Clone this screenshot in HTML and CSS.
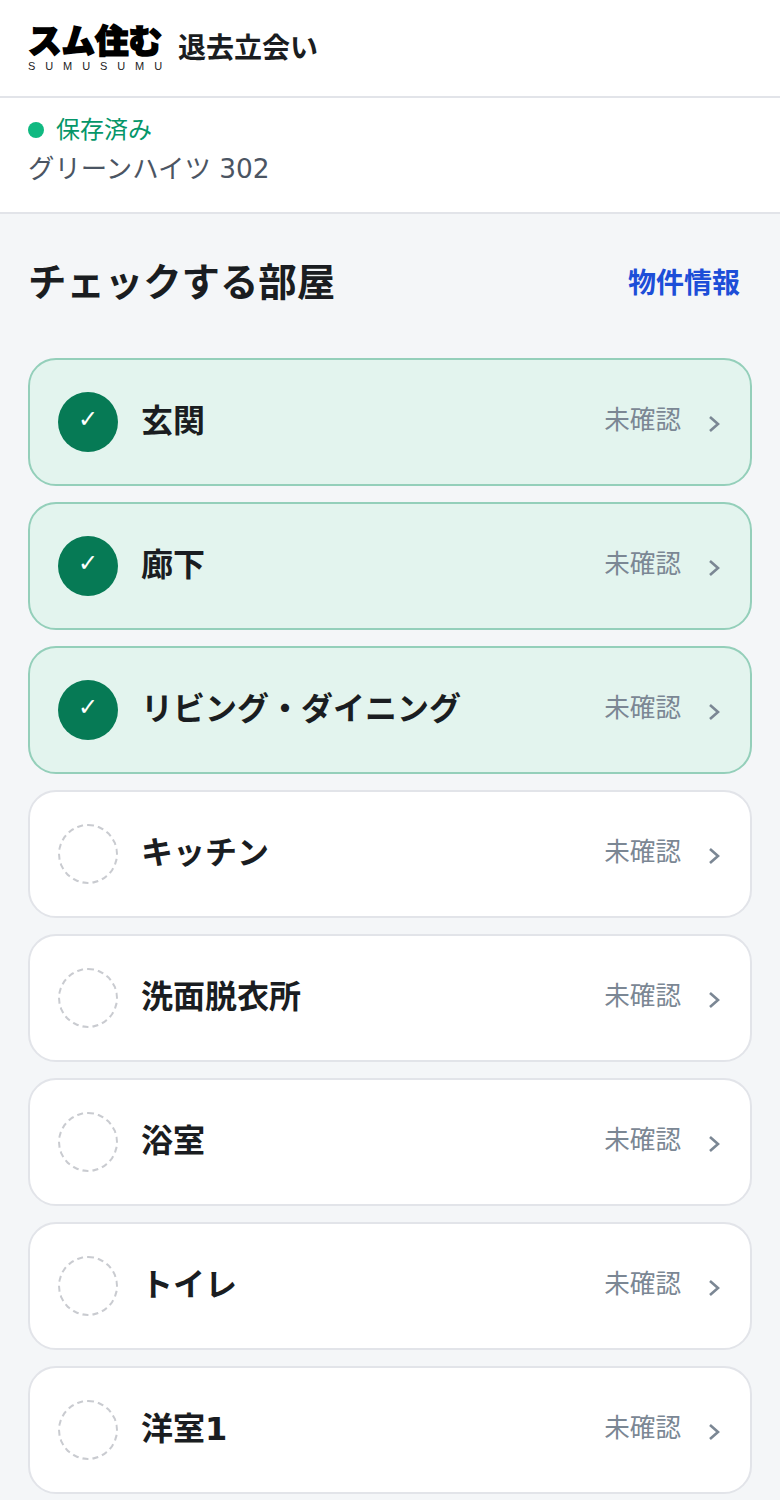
FILE: index.html
```html
<!DOCTYPE html>
<html lang="ja">
<head>
    <meta charset="UTF-8">
    <meta name="viewport" content="width=device-width, initial-scale=1.0">
    <title>退去立会い</title>
    <link rel="stylesheet" href="styles.css">
</head>
<body>
    <header class="topBar">
        <div class="logo">
            <span class="logoMain">スム住む</span>
            <span class="logoSub">SUMUSUMU</span>
        </div>
        <span class="appName">退去立会い</span>
    </header>

    <div class="status">
        <p class="saved"><span class="dot"></span>保存済み</p>
        <p class="property">グリーンハイツ 302</p>
    </div>

    <main class="content">
        <div class="contentHead">
            <h1>チェックする部屋</h1>
            <a class="infoLink" href="#">物件情報</a>
        </div>

        <ul class="roomList">
            <li class="room done">
                <span class="mark">✓</span>
                <span class="roomName">玄関</span>
                <span class="roomState">未確認</span>
                <svg class="chevron" viewBox="0 0 12 20"><path d="M2 3l8 7-8 7"/></svg>
            </li>
            <li class="room done">
                <span class="mark">✓</span>
                <span class="roomName">廊下</span>
                <span class="roomState">未確認</span>
                <svg class="chevron" viewBox="0 0 12 20"><path d="M2 3l8 7-8 7"/></svg>
            </li>
            <li class="room done">
                <span class="mark">✓</span>
                <span class="roomName">リビング・ダイニング</span>
                <span class="roomState">未確認</span>
                <svg class="chevron" viewBox="0 0 12 20"><path d="M2 3l8 7-8 7"/></svg>
            </li>
            <li class="room">
                <span class="mark"></span>
                <span class="roomName">キッチン</span>
                <span class="roomState">未確認</span>
                <svg class="chevron" viewBox="0 0 12 20"><path d="M2 3l8 7-8 7"/></svg>
            </li>
            <li class="room">
                <span class="mark"></span>
                <span class="roomName">洗面脱衣所</span>
                <span class="roomState">未確認</span>
                <svg class="chevron" viewBox="0 0 12 20"><path d="M2 3l8 7-8 7"/></svg>
            </li>
            <li class="room">
                <span class="mark"></span>
                <span class="roomName">浴室</span>
                <span class="roomState">未確認</span>
                <svg class="chevron" viewBox="0 0 12 20"><path d="M2 3l8 7-8 7"/></svg>
            </li>
            <li class="room">
                <span class="mark"></span>
                <span class="roomName">トイレ</span>
                <span class="roomState">未確認</span>
                <svg class="chevron" viewBox="0 0 12 20"><path d="M2 3l8 7-8 7"/></svg>
            </li>
            <li class="room">
                <span class="mark"></span>
                <span class="roomName">洋室1</span>
                <span class="roomState">未確認</span>
                <svg class="chevron" viewBox="0 0 12 20"><path d="M2 3l8 7-8 7"/></svg>
            </li>
        </ul>
    </main>
</body>
</html>
```

FILE: styles.css
```css
* {
    box-sizing: border-box;
}
html, body {
    height: 1500px;
    overflow: hidden;
}
body {
    margin: 0;
    background-color: #f4f6f8;
    color: #1a1d21;
    font-family: "DejaVu Sans", "Noto Sans CJK JP", sans-serif;
}
.topBar {
    display: flex;
    align-items: center;
    height: 98px;
    padding: 0 28px;
    gap: 15px;
    background-color: #fff;
    border-bottom: 2px solid #e2e4e9;
}
.logo {
    display: flex;
    flex-direction: column;
    width: 135px;
}
.logoMain {
    font-family: "Liberation Sans", "Noto Sans CJK JP", sans-serif;
    font-weight: 900;
    font-size: 33.5px;
    line-height: 33px;
    color: #000;
    white-space: nowrap;
    -webkit-text-stroke: 1.6px #000;
}
.logoSub {
    font-family: "Liberation Sans", sans-serif;
    font-size: 11px;
    line-height: 12px;
    margin-top: 2px;
    letter-spacing: 9.9px;
    color: #222;
    white-space: nowrap;
}
.appName {
    font-size: 28px;
    font-weight: 700;
    margin-top: -5px;
}
.status {
    height: 116px;
    padding: 16px 28px 0;
    background-color: #fff;
    border-bottom: 2px solid #e2e4e9;
}
.saved {
    display: flex;
    align-items: center;
    gap: 12px;
    margin: 0;
    font-size: 24px;
    line-height: 32px;
    color: #059669;
}
.dot {
    width: 16px;
    height: 16px;
    border-radius: 50%;
    background-color: #10b981;
}
.property {
    margin: 5px 0 0;
    font-size: 26.4px;
    line-height: 36px;
    color: #4b5563;
}
.content {
    padding: 0 28px;
}
.contentHead {
    display: flex;
    justify-content: space-between;
    align-items: center;
    height: 144px;
    padding-right: 12px;
    padding-bottom: 10px;
}
h1 {
    margin: 0;
    font-size: 38.4px;
    font-weight: 700;
    margin-top: -4px;
}
.infoLink {
    font-size: 28px;
    font-weight: 700;
    color: #1d4ed8;
    text-decoration: none;
}
.roomList {
    display: flex;
    flex-direction: column;
    gap: 16px;
    margin: 0;
    padding: 0;
    list-style: none;
}
.room {
    display: flex;
    align-items: center;
    height: 128px;
    padding: 0 28px;
    background-color: #fff;
    border: 2px solid #e2e4e9;
    border-radius: 28px;
}
.room.done {
    background-color: #e3f4ee;
    border-color: #94cfba;
}
.mark {
    display: flex;
    justify-content: center;
    align-items: center;
    flex: none;
    width: 60px;
    height: 60px;
    margin-right: 24px;
    border: 2px dashed #c9cbd0;
    border-radius: 50%;
    color: #fff;
    font-size: 24px;
}
.done .mark {
    background-color: #067a55;
    border: 0;
    padding-bottom: 6px;
}
.roomName {
    flex: 1;
    font-size: 32px;
    font-weight: 700;
    margin-top: -8px;
    margin-left: -1px;
}
.roomState {
    font-size: 25.6px;
    color: #7b8794;
    margin-top: -10px;
}
.chevron {
    width: 12px;
    height: 20px;
    margin-left: 27px;
    margin-right: 2px;
    margin-top: 4px;
    fill: none;
    stroke: #7b8794;
    stroke-width: 2.6;
}
```
